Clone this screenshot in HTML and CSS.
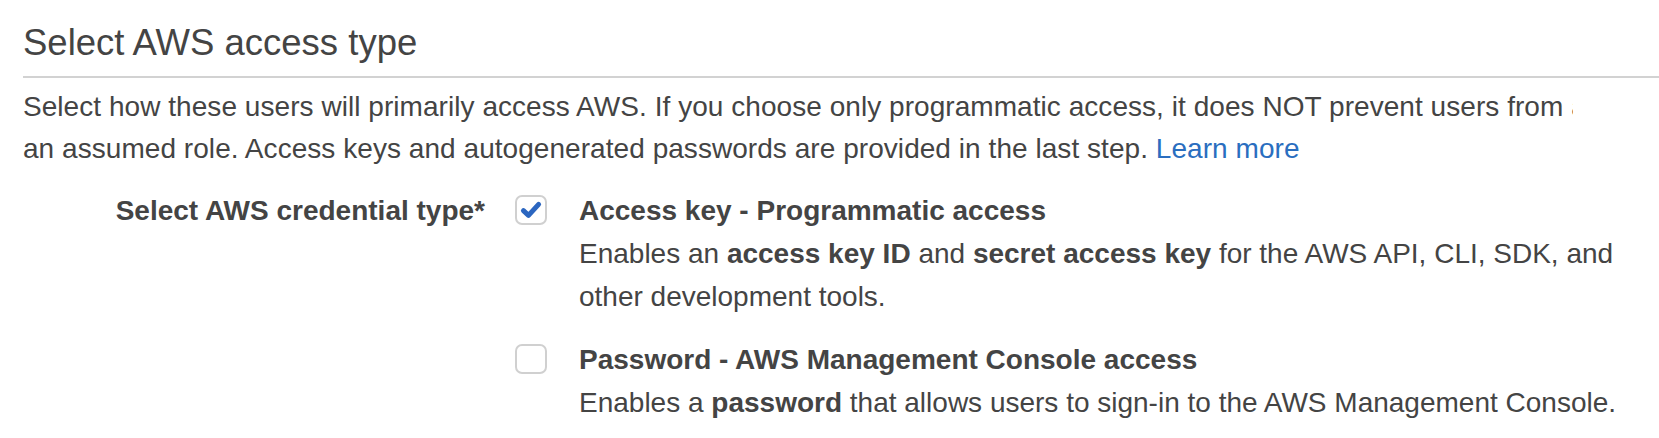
FILE: index.html
```html
<!DOCTYPE html>
<html lang="en">
<head>
<meta charset="utf-8">
<title>Select AWS access type</title>
<link rel="stylesheet" href="styles.css">
</head>
<body>
<div class="page">
  <h2 class="section-title">Select AWS access type</h2>
  <div class="intro">
    <span class="intro-line">Select how these users will primarily access AWS. If you choose only programmatic access, it does NOT prevent users from accessing the console using</span>
    <span class="intro-line">an assumed role. Access keys and autogenerated passwords are provided in the last step. <a class="link" href="#">Learn more</a></span>
  </div>
  <div class="form-row">
    <div class="form-label">Select AWS credential type*</div>
    <div class="options">
      <div class="option">
        <span class="checkbox checked">
          <svg viewBox="0 0 24 24" width="26" height="26" aria-hidden="true"><path d="M5 12.6 L9.7 17 L19 6.8" fill="none" stroke="#2b66c0" stroke-width="4.6" stroke-linecap="round" stroke-linejoin="round"/></svg>
        </span>
        <div class="option-text">
          <div class="option-title">Access key - Programmatic access</div>
          <div class="option-desc">Enables an <b>access key ID</b> and <b>secret access key</b> for the AWS API, CLI, SDK, and other development tools.</div>
        </div>
      </div>
      <div class="option">
        <span class="checkbox"></span>
        <div class="option-text">
          <div class="option-title">Password - AWS Management Console access</div>
          <div class="option-desc">Enables a <b>password</b> that allows users to sign-in to the AWS Management Console.</div>
        </div>
      </div>
    </div>
  </div>
</div>
</body>
</html>
```
FILE: styles.css
```css
html, body {
  margin: 0;
  padding: 0;
  background: #ffffff;
}

body {
  font-family: "Liberation Sans", Arial, Helvetica, sans-serif;
  color: #444444;
  font-size: 28px;
  line-height: 42px;
  overflow: hidden;
}

.page {
  padding: 22px 0 0 23px;
}

.section-title {
  margin: 0;
  font-size: 36.5px;
  line-height: 42px;
  font-weight: 400;
  color: #444444;
  padding-bottom: 12px;
  border-bottom: 2px solid #d2d2d2;
}

.intro {
  margin-top: 8px;
  width: 1550px;
  overflow: hidden;
  letter-spacing: 0.05px;
}

.intro-line {
  display: block;
  white-space: nowrap;
}

.link {
  color: #2a6ebf;
  text-decoration: none;
}

.form-row {
  display: flex;
  margin-top: 19px;
}

.form-label {
  width: 462px;
  flex: none;
  text-align: right;
  font-weight: 700;
  line-height: 43px;
}

.options {
  display: flex;
  flex-direction: column;
  gap: 20px;
  padding-left: 30px;
  flex: 1;
}

.option {
  display: flex;
  gap: 32px;
  line-height: 43px;
}

.checkbox {
  flex: none;
  box-sizing: border-box;
  width: 32px;
  height: 30px;
  margin-top: 6px;
  border: 2px solid #d0d0d0;
  border-radius: 7px;
  display: flex;
  align-items: center;
  justify-content: center;
}

.option-text {
  flex: 1;
}

.option-title {
  font-weight: 700;
}

.option-desc b {
  font-weight: 700;
}
```
